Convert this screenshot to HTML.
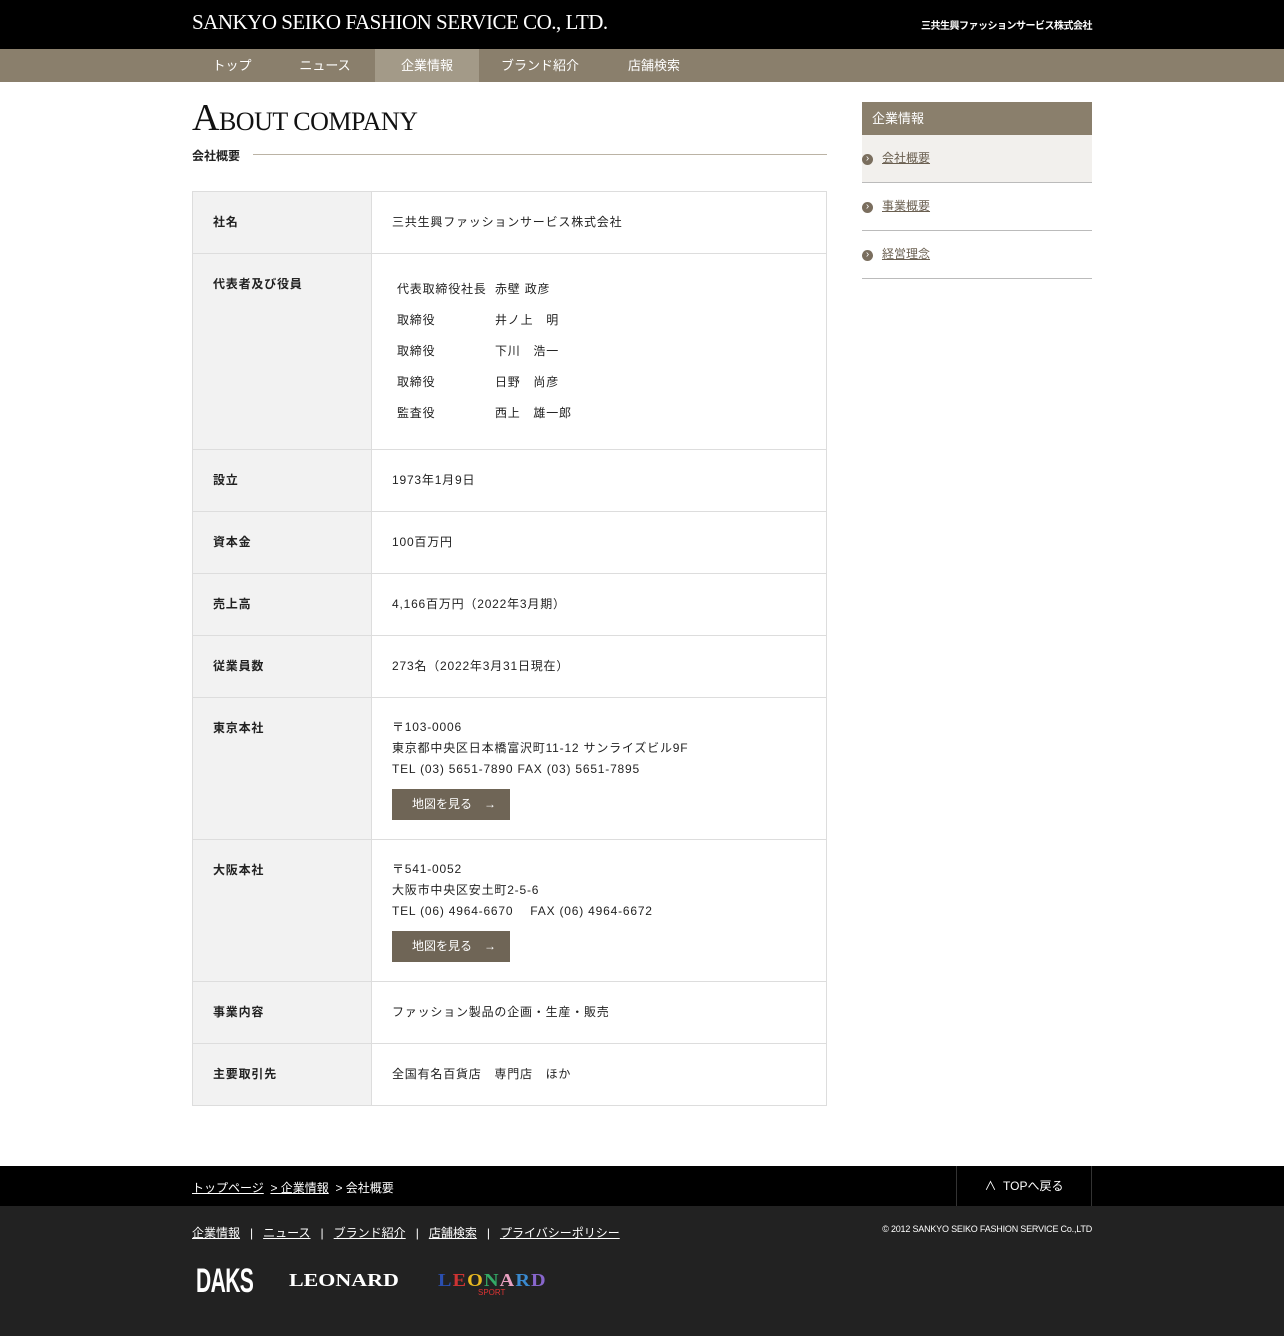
<!DOCTYPE html>
<html><head><meta charset="utf-8"><style>
*{margin:0;padding:0;box-sizing:border-box}
body{width:1284px;height:1336px;background:#fff;font-family:"Liberation Sans","Noto Sans CJK JP",sans-serif;color:#222;position:relative;overflow:hidden}
.hd{height:49px;background:#000;position:relative}
.hd .t{position:absolute;left:192px;top:10px;font-family:"Liberation Serif","Noto Serif CJK SC",serif;color:#fff;font-size:21px;letter-spacing:-0.5px}
.hd .r{position:absolute;right:192px;top:17px;color:#fff;font-size:10px;font-weight:bold;letter-spacing:-0.5px}
.nav{height:33px;background:#8a7f6c;position:relative}
.nav span{position:absolute;top:0;height:33px;line-height:33px;color:#fff;font-size:13px;text-align:center}
.nav .on{background:#a39a88}
h1{position:absolute;left:192px;top:96px;font-family:"Liberation Serif",serif;font-weight:normal;font-size:26px;color:#111;letter-spacing:-0.5px}
h1 b{font-weight:normal;font-size:38px}
.sub{position:absolute;left:192px;top:147px;font-size:12px;font-weight:bold}
.line{position:absolute;left:253px;top:154px;width:574px;height:1px;background:#bbb3a5}
table{position:absolute;left:192px;top:191px;width:635px;border-collapse:collapse;font-size:12px;letter-spacing:0.8px}
td{border:1px solid #ddd;vertical-align:top;padding:21px 20px 0}
td.l{width:179px;background:#f2f2f2;font-weight:bold}
.btn{display:inline-block;margin-top:9px;width:118px;height:31px;line-height:31px;background:#6f6556;color:#fff;font-size:12px;padding-left:20px;letter-spacing:0}
.side{position:absolute;left:862px;top:102px;width:230px}
.side .h{height:33px;background:#8a7f6c;color:#fff;font-size:13px;line-height:33px;padding-left:10px}
.side .i{height:48px;border-bottom:1px solid #bbb;font-size:12px;line-height:46px;padding-left:20px;position:relative;color:#6a5f50;text-decoration:underline}
.side .i:before{content:"›";position:absolute;left:0;top:19px;width:11px;height:11px;border-radius:50%;background:#7a6e5e;color:#fff;font-size:10px;line-height:10px;text-align:center}
.bc{position:absolute;left:0;top:1166px;width:1284px;height:40px;background:#000;color:#fff;font-size:12px}
.ft{position:absolute;left:0;top:1206px;width:1284px;height:130px;background:#222;color:#fff;font-size:12px}
u{text-decoration:underline}
</style></head><body>
<div class="hd"><div class="t">SANKYO SEIKO FASHION SERVICE CO., LTD.</div><div class="r">三共生興ファッションサービス株式会社</div></div>
<div class="nav"><span style="left:192px;width:80px">トップ</span><span style="left:285px;width:80px">ニュース</span><span class="on" style="left:375px;width:104px">企業情報</span><span style="left:490px;width:100px">ブランド紹介</span><span style="left:614px;width:80px">店舗検索</span></div>
<h1><b>A</b>BOUT COMPANY</h1>
<div class="sub">会社概要</div><div class="line"></div>
<table>
<tr style="height:62px"><td class="l">社名</td><td>三共生興ファッションサービス株式会社</td></tr>
<tr style="height:196px"><td class="l">代表者及び役員</td><td style="padding-top:20px;padding-left:25px;line-height:31px">
<div><span style="display:inline-block;width:98px">代表取締役社長</span>赤壁 政彦</div>
<div><span style="display:inline-block;width:98px">取締役</span>井ノ上　明</div>
<div><span style="display:inline-block;width:98px">取締役</span>下川　浩一</div>
<div><span style="display:inline-block;width:98px">取締役</span>日野　尚彦</div>
<div><span style="display:inline-block;width:98px">監査役</span>西上　雄一郎</div></td></tr>
<tr style="height:62px"><td class="l">設立</td><td>1973年1月9日</td></tr>
<tr style="height:62px"><td class="l">資本金</td><td>100百万円</td></tr>
<tr style="height:62px"><td class="l">売上高</td><td>4,166百万円（2022年3月期）</td></tr>
<tr style="height:62px"><td class="l">従業員数</td><td>273名（2022年3月31日現在）</td></tr>
<tr style="height:142px"><td class="l">東京本社</td><td style="line-height:21px;padding-top:19px">〒103-0006<br>東京都中央区日本橋富沢町11-12 サンライズビル9F<br>TEL (03) 5651-7890 FAX (03) 5651-7895<br><span class="btn">地図を見る　→</span></td></tr>
<tr style="height:142px"><td class="l">大阪本社</td><td style="line-height:21px;padding-top:19px">〒541-0052<br>大阪市中央区安土町2-5-6<br>TEL (06) 4964-6670　 FAX (06) 4964-6672<br><span class="btn">地図を見る　→</span></td></tr>
<tr style="height:62px"><td class="l">事業内容</td><td>ファッション製品の企画・生産・販売</td></tr>
<tr style="height:62px"><td class="l">主要取引先</td><td>全国有名百貨店　専門店　ほか</td></tr>
</table>
<div class="side"><div class="h">企業情報</div><div class="i" style="background:#f2f0ed">会社概要</div><div class="i">事業概要</div><div class="i">経営理念</div></div>
<div class="bc"><div style="position:absolute;left:192px;top:13px"><u>トップページ</u>&nbsp; <u>&gt; 企業情報</u>&nbsp; &gt; 会社概要</div>
<div style="position:absolute;left:956px;top:0;width:136px;height:40px;border-left:1px solid #333;border-right:1px solid #333;text-align:center;line-height:40px">∧&nbsp; TOPへ戻る</div></div>
<div class="ft"><div style="position:absolute;left:192px;top:18px;word-spacing:0"><u>企業情報</u>&nbsp;&nbsp; | &nbsp;&nbsp;<u>ニュース</u>&nbsp;&nbsp; | &nbsp;&nbsp;<u>ブランド紹介</u>&nbsp;&nbsp; | &nbsp;&nbsp;<u>店舗検索</u>&nbsp;&nbsp; | &nbsp;&nbsp;<u>プライバシーポリシー</u></div>
<div style="position:absolute;right:192px;top:18px;font-size:9px;letter-spacing:-0.2px">© 2012 SANKYO SEIKO FASHION SERVICE Co.,LTD</div>
<div style="position:absolute;left:196px;top:56px;font-size:34px;font-weight:bold;transform:scaleX(0.62);transform-origin:left;letter-spacing:-1px">DAKS</div>
<div style="position:absolute;left:289px;top:64px;font-family:'Liberation Serif',serif;font-size:18px;font-weight:bold;transform:scaleX(1.22);transform-origin:left">LEONARD</div>
<div style="position:absolute;left:438px;top:64px;font-family:'Liberation Serif',serif;font-size:18px;font-weight:bold;letter-spacing:1px;transform:scaleX(1.12);transform-origin:left"><span style="color:#2a4fb0">L</span><span style="color:#c33">E</span><span style="color:#e8b820">O</span><span style="color:#3a6">N</span><span style="color:#e8a0c0">A</span><span style="color:#3a8ad0">R</span><span style="color:#8866cc">D</span></div>
<div style="position:absolute;left:478px;top:82px;font-size:8px;color:#d33">SPORT</div></div>
</body></html>
